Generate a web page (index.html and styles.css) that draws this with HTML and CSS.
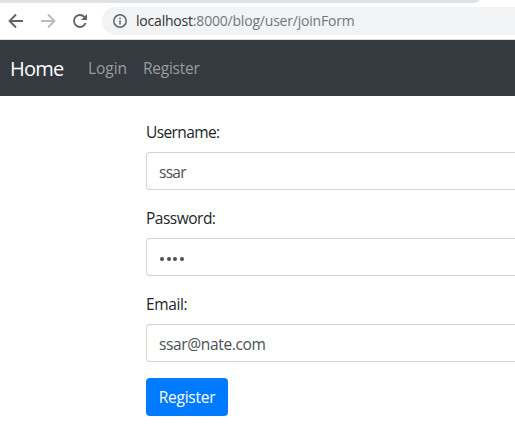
FILE: index.html
```html
<!DOCTYPE html>
<html lang="en">
<head>
<meta charset="utf-8">
<title>Register</title>
<link rel="stylesheet" href="styles.css">
</head>
<body>
<div class="tabstrip"></div>
<div class="toolbar">
  <svg class="icon" width="16" height="16" viewBox="0 0 16 16"><path d="M15 8H2M8 1.5 1.6 8 8 14.5"/></svg>
  <svg class="icon muted" width="16" height="16" viewBox="0 0 16 16"><path d="M1 8h13M8 1.5 14.4 8 8 14.5"/></svg>
  <svg class="icon" width="16" height="16" viewBox="0 0 16 16"><path d="M13.6 10A6 6 0 1 1 12.3 3.8L14 5.5"/><path class="solid" d="M15 1v6H9z"/></svg>
  <div class="address">
    <svg class="info" width="14" height="14" viewBox="0 0 14 14"><circle cx="7" cy="7" r="6.2"/><path d="M7 6.2v4.3M7 3.4v1.6"/></svg>
    <span class="url"><span class="host">localhost</span><span class="path">:8000/blog/user/joinForm</span></span>
  </div>
</div>
<nav class="navbar">
  <a class="brand">Home</a>
  <a class="link login">Login</a>
  <a class="link register">Register</a>
</nav>
<form class="form">
  <div class="group">
    <label class="label-user" for="username">Username:</label>
    <input class="control username" id="username" type="text" value="ssar">
  </div>
  <div class="group">
    <label class="label-pass">Password:</label>
    <div class="control dots"><i></i><i></i><i></i><i></i></div>
  </div>
  <div class="group">
    <label class="label-email" for="email">Email:</label>
    <input class="control email" id="email" type="text" value="ssar@nate.com">
  </div>
  <button class="submit" type="button">Register</button>
</form>
</body>
</html>
```
FILE: styles.css
```css
* { box-sizing: border-box; }
body {
  margin: 0;
  height: 433px;
  overflow: hidden;
  background: #fff;
  color: #212529;
  font: 15.5px/24px "Open Sans", "Noto Sans", sans-serif;
}
.tabstrip {
  width: 479px;
  height: 3px;
  background: #dee1e6;
  border-bottom-right-radius: 5px 3px;
}
.toolbar {
  display: flex;
  align-items: center;
  height: 37px;
  padding-left: 8px;
  gap: 16px;
  border-bottom: 1px solid #dadce0;
}
.icon { flex: none; fill: none; stroke: #5f6368; stroke-width: 1.9; }
.icon .solid { fill: #5f6368; stroke: none; }
.icon.muted { stroke: #babcbe; }
.address {
  display: flex;
  align-items: center;
  flex: 1;
  height: 28px;
  margin-left: -2px;
  padding-left: 11px;
  gap: 9px;
  background: #f1f3f4;
  border-radius: 14px 0 0 14px;
}
.info { flex: none; fill: none; stroke: #5f6368; stroke-width: 1.5; }
.url { font-size: 14px; letter-spacing: -0.2px; white-space: nowrap; }
.host { color: #303236; }
.path { color: #74777b; }
.navbar {
  display: flex;
  align-items: center;
  height: 56px;
  padding: 0 10px;
  background: #343a40;
}
.brand { width: 78px; padding-top: 1px; color: #fff; font-size: 20px; letter-spacing: -0.75px; }
.link { color: #999c9f; }
.login { width: 55px; letter-spacing: -0.05px; }
.register, .submit { letter-spacing: -0.25px; }
.form { margin: 24px 0 0 146px; }
.group { margin-bottom: 16px; }
label { display: block; height: 24px; margin-bottom: 8px; }
.label-user { letter-spacing: -0.6px; }
.label-pass { letter-spacing: -0.5px; }
.label-email { letter-spacing: -0.4px; }
.control {
  display: block;
  width: 100%;
  height: 38px;
  padding: 7px 12px 5px;
  border: 1px solid #ced4da;
  border-right: 0;
  border-radius: 4px 0 0 4px;
  background: #fff;
  color: #495057;
  font: inherit;
}
.username { letter-spacing: -0.7px; }
.email { letter-spacing: -0.35px; }
.dots { display: flex; align-items: center; gap: 2.4px; padding: 8px 13px 4px; }
.dots i { width: 4.2px; height: 4.2px; border-radius: 50%; background: #495057; }
.submit {
  width: 82px;
  height: 38px;
  padding: 0;
  border: 0;
  border-radius: 4px;
  background: #007bff;
  color: #fff;
  font-family: inherit;
  font-size: inherit;
  line-height: inherit;
}
```
